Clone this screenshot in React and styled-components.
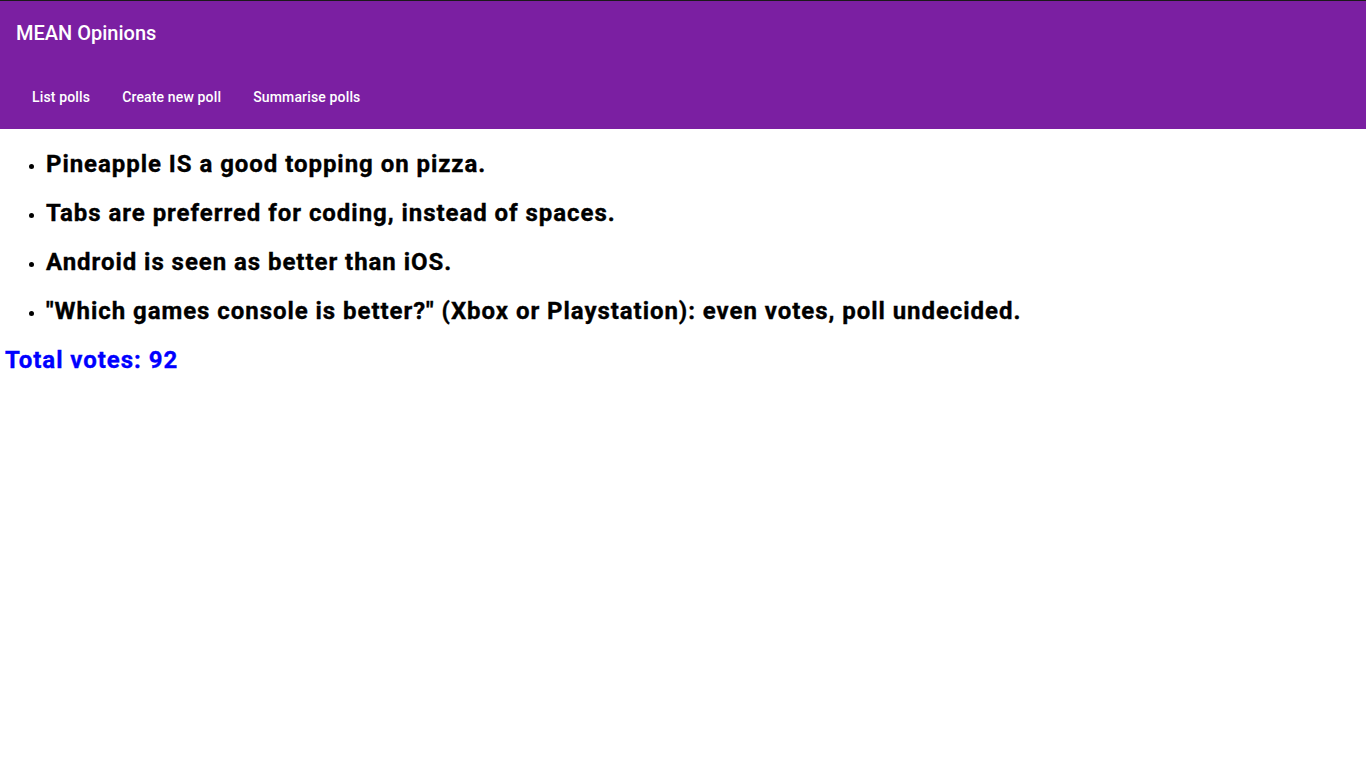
import React from "react";
import styled, { createGlobalStyle } from "styled-components";

const GlobalStyle = createGlobalStyle`
  body {
    margin: 0;
    font-family: Roboto, "Helvetica Neue", sans-serif;
    background: #fff;
  }
`;

const Toolbar = styled.header`
  background: #7b1fa2;
  color: #fff;
  border-top: 1px solid #1a1a1a;
`;

const ToolbarRow = styled.div`
  display: flex;
  align-items: center;
  height: 64px;
  padding: 0 16px;
`;

const Title = styled.span`
  font-size: 20px;
  font-weight: 500;
`;

const NavButton = styled.a`
  display: inline-flex;
  align-items: center;
  height: 36px;
  padding: 0 16px;
  font-size: 14px;
  font-weight: 500;
  letter-spacing: 0.15px;
  color: #fff;
  text-decoration: none;
  cursor: pointer;
`;

const Main = styled.main`
  padding: 1px 5px 0;
`;

const PollList = styled.ul`
  margin: 0;
  padding-left: 41px;
`;

const Heading = styled.h2`
  font-size: 24px;
  font-weight: 700;
  line-height: 29px;
  letter-spacing: 0.95px;
  -webkit-text-stroke: 0.35px currentColor;
  margin: 20px 0;
  color: ${(p) => p.color || "#000"};
`;

const polls = [
  "Pineapple IS a good topping on pizza.",
  "Tabs are preferred for coding, instead of spaces.",
  "Android is seen as better than iOS.",
  "\"Which games console is better?\" (Xbox or Playstation): even votes, poll undecided.",
];

export default function App() {
  return (
    <>
      <GlobalStyle />
      <Toolbar>
        <ToolbarRow>
          <Title>MEAN Opinions</Title>
        </ToolbarRow>
        <ToolbarRow>
          <NavButton>List polls</NavButton>
          <NavButton>Create new poll</NavButton>
          <NavButton>Summarise polls</NavButton>
        </ToolbarRow>
      </Toolbar>
      <Main>
        <PollList>
          {polls.map((p, i) => (
            <li key={i}>
              <Heading>{p}</Heading>
            </li>
          ))}
        </PollList>
        <Heading color="#0000ff">Total votes: 92</Heading>
      </Main>
    </>
  );
}
